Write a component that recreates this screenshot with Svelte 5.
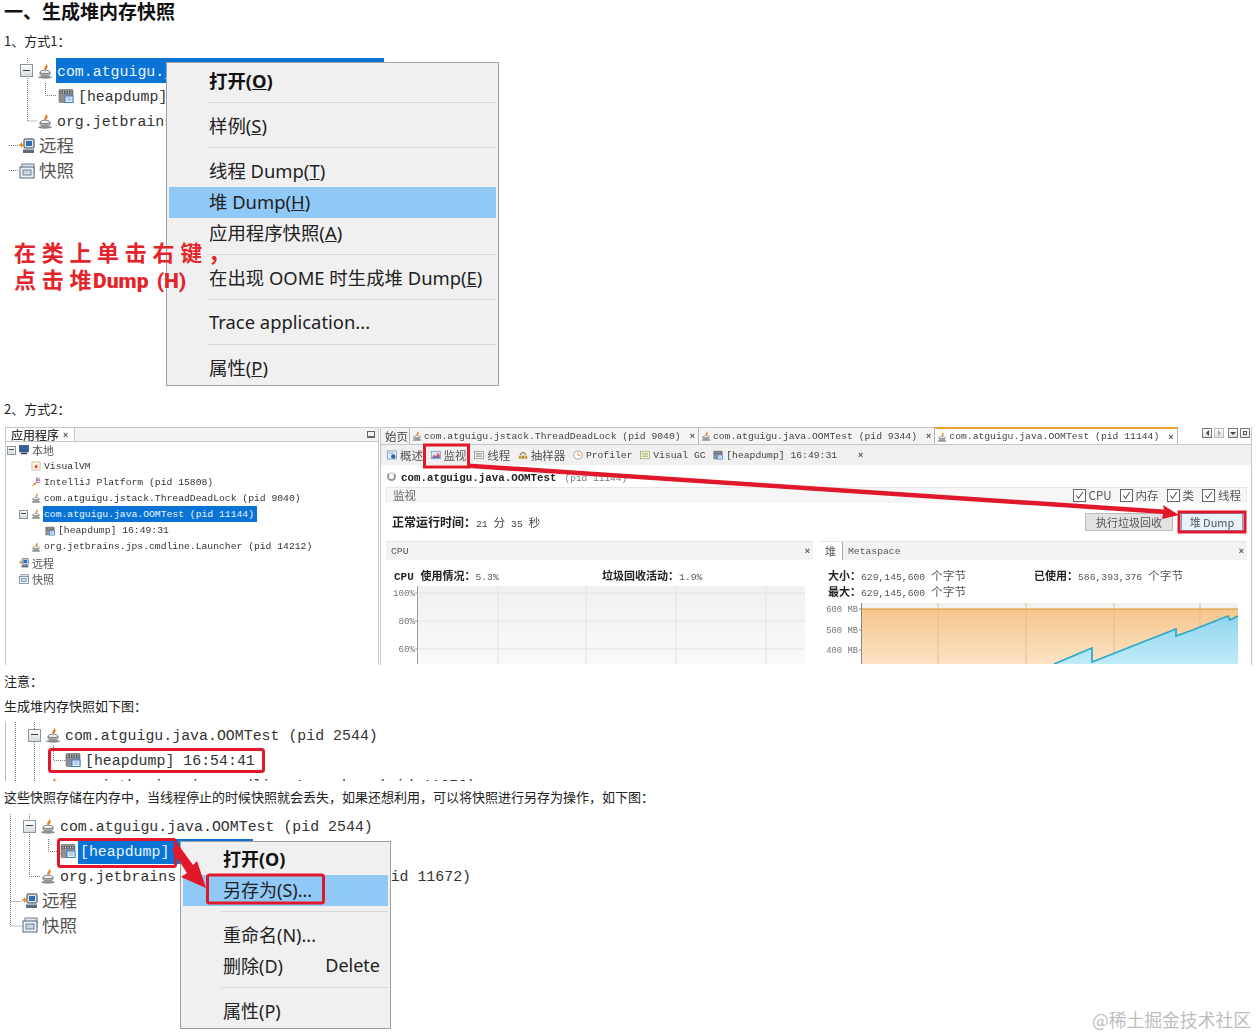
<script>
  // screenshots embedded in the article are rebuilt as small trees, menus and panes
  const tree1 = [
    { x: 20, exp: true, icon: "java", text: "com.atguigu.java.OOMTest (pid 11144)", sel: true },
    { x: 58, icon: "heap", text: "[heapdump]" },
    { x: 37, icon: "java", text: "org.jetbrains.jps.cmdline.Launcher (pid 14212)" },
    { x: 19, icon: "remote", text: "远程", cn: true },
    { x: 19, icon: "snap", text: "快照", cn: true }
  ];

  const tree2 = [
    { x: 1, exp: true, icon: "local", text: "本地", cn: true },
    { x: 25, icon: "vm", text: "VisualVM" },
    { x: 25, icon: "idea", text: "IntelliJ Platform (pid 15808)" },
    { x: 25, icon: "java", text: "com.atguigu.jstack.ThreadDeadLock (pid 9040)" },
    { x: 13, exp: true, icon: "java", text: "com.atguigu.java.OOMTest (pid 11144)", sel: true },
    { x: 39, icon: "heap", text: "[heapdump] 16:49:31" },
    { x: 25, icon: "java", text: "org.jetbrains.jps.cmdline.Launcher (pid 14212)" },
    { x: 13, icon: "remote", text: "远程", cn: true },
    { x: 13, icon: "snap", text: "快照", cn: true }
  ];

  const tree3 = [
    { x: 28, exp: true, icon: "java", text: "com.atguigu.java.OOMTest (pid 2544)" },
    { x: 65, icon: "heap", text: "[heapdump] 16:54:41" },
    { x: 45, icon: "java", text: "org.jetbrains.jps.cmdline.Launcher (pid 11672)" }
  ];

  const tree4 = [
    { x: 23, exp: true, icon: "java", text: "com.atguigu.java.OOMTest (pid 2544)" },
    { x: 60, icon: "heap", text: "[heapdump] 16:54:41", sel: true },
    { x: 40, icon: "java", text: "org.jetbrains.jps.cmdline.Launcher (pid 11672)" },
    { x: 22, icon: "remote", text: "远程", cn: true },
    { x: 22, icon: "snap", text: "快照", cn: true }
  ];

  const menu1 = [
    { label: "打开", key: "O", bold: true },
    { sep: true },
    { label: "样例", key: "S" },
    { sep: true },
    { label: "线程 Dump", key: "T" },
    { label: "堆 Dump", key: "H", hot: true },
    { label: "应用程序快照", key: "A" },
    { sep: true },
    { label: "在出现 OOME 时生成堆 Dump", key: "E" },
    { sep: true },
    { label: "Trace application..." },
    { sep: true },
    { label: "属性", key: "P" }
  ];

  const menu2 = [
    { label: "打开(O)", bold: true },
    { label: "另存为(S)...", hot: true },
    { sep: true },
    { label: "重命名(N)..." },
    { label: "删除(D)", accel: "Delete" },
    { sep: true },
    { label: "属性(P)" }
  ];

  const docTabs = [
    { text: "com.atguigu.jstack.ThreadDeadLock (pid 9040)" },
    { text: "com.atguigu.java.OOMTest (pid 9344)" },
    { text: "com.atguigu.java.OOMTest (pid 11144)", active: true }
  ];

  const subTabs = [
    { icon: "info", text: "概述", cn: true },
    { icon: "chart", text: "监视", cn: true },
    { icon: "lines", text: "线程", cn: true },
    { icon: "sampler", text: "抽样器", cn: true },
    { icon: "clock", text: "Profiler" },
    { icon: "gc", text: "Visual GC" },
    { icon: "heap", text: "[heapdump] 16:49:31", close: true }
  ];

  const checks = ["CPU", "内存", "类", "线程"];
</script>

{#snippet icon(name)}
  <svg class="ico" viewBox="0 0 16 16">
    {#if name === "java"}
      <path d="M9 0.5c1 2.4-2.6 3.4-1.6 6 .3.7.8 1.2 1.2 1.6-.3-1.8 2.8-3 2-5.2-.3-.9-.9-1.6-1.6-2.4z" fill="#e0842a" />
      <ellipse cx="8" cy="9" rx="5" ry="1.8" fill="#eee" stroke="#777" stroke-width=".8" />
      <path d="M3 9v2.2c0 1 2.2 1.8 5 1.8s5-.8 5-1.8V9c0 1-2.2 1.8-5 1.8S3 10 3 9z" fill="#b5b5b5" stroke="#777" stroke-width=".8" />
      <ellipse cx="8" cy="14.2" rx="7" ry="1.5" fill="#8f8f8f" />
    {:else if name === "heap"}
      <rect x="1" y="1.5" width="14" height="13" rx="1" fill="#8d9197" stroke="#666" stroke-width=".6" />
      <path d="M1.5 4.5h13" stroke="#55595d" stroke-width="3" />
      <path d="M3 3.5v2M5.5 3.5v2M8 3.5v2M10.5 3.5v2M13 3.5v2" stroke="#ddd" stroke-width="1" />
      <rect x="7" y="8" width="8" height="6.5" fill="#eef4fb" stroke="#3b78c4" />
      <path d="M8.5 10h5M8.5 12h5" stroke="#7fa8d8" />
    {:else if name === "remote"}
      <rect x="5" y="1" width="10" height="9" rx="1" fill="#dfe6ee" stroke="#2d3c50" />
      <rect x="7" y="3" width="6" height="5" fill="#2f6db5" />
      <path d="M0 7h5M2.5 4.5v5" stroke="#d98a2b" stroke-width="1.4" />
      <path d="M4 11.5h11v3.5H4z" fill="#5b6a7c" />
    {:else if name === "snap"}
      <rect x="3" y="1" width="12" height="9" fill="#dfe6ee" stroke="#6f8094" />
      <rect x="1" y="4" width="14" height="11" fill="#eef2f6" stroke="#55677d" />
      <rect x="4" y="7" width="8" height="5" fill="#c9d5e2" stroke="#6f8094" />
    {:else if name === "local"}
      <rect x="1" y="1" width="14" height="10" fill="#2f5f9c" stroke="#22344f" />
      <path d="M3 13.5h10" stroke="#22344f" stroke-width="2.4" />
    {:else if name === "vm"}
      <rect x="1.5" y="1.5" width="13" height="13" fill="#fdf5ea" stroke="#b89a78" />
      <path d="M5 10l3-5 3 3-2 4z" fill="#d8562c" />
    {:else if name === "idea"}
      <path d="M2 14l5-5M5 14l4-6" stroke="#d88a2a" stroke-width="1.6" />
      <path d="M9 1v8M9 1.5h3.5a2 2 0 010 3.5H9M9 5h4a2.2 2.2 0 010 4H9" fill="none" stroke="#a34fa8" stroke-width="1.3" />
    {:else if name === "info"}
      <rect x="1" y="1.5" width="14" height="13" fill="#e8eef6" stroke="#5d7ea8" />
      <circle cx="10" cy="10.5" r="3.6" fill="#2c68b0" />
      <path d="M3 5h8" stroke="#5d7ea8" />
    {:else if name === "chart"}
      <rect x="1" y="2" width="14" height="12" fill="#dbe7f5" stroke="#6d86a8" />
      <path d="M2 12l3-5 3 3 3-6 3 4v4H2z" fill="#d5567a" />
      <path d="M2 12h12" stroke="#3b78c4" stroke-width="2" />
    {:else if name === "lines"}
      <rect x="1" y="2" width="14" height="12" fill="#f4f4f0" stroke="#7a7a70" />
      <path d="M3 5.5h10M3 8h10M3 10.5h10" stroke="#6f7f60" />
    {:else if name === "sampler"}
      <path d="M4 8a4 4 0 018 0" fill="none" stroke="#7a5a20" stroke-width="1.5" />
      <rect x="1" y="9" width="4" height="5" fill="#d99a2b" />
      <rect x="6" y="9" width="4" height="5" fill="#7f9a3b" />
      <rect x="11" y="9" width="4" height="5" fill="#d99a2b" />
    {:else if name === "clock"}
      <circle cx="8" cy="8" r="6.5" fill="#fff" stroke="#777" />
      <path d="M8 4v4.5h3.5" fill="none" stroke="#d0702a" stroke-width="1.2" />
    {:else if name === "gc"}
      <rect x="1" y="2" width="14" height="12" fill="#fbf8d8" stroke="#8a9a60" />
      <path d="M3 5.5h10M3 8h10M3 10.5h10" stroke="#7aa060" />
    {/if}
  </svg>
{/snippet}

{#snippet tree(rows, cls)}
  <div class="tree {cls}">
    {#each rows as r}
      <div class="row" style="padding-left: {r.x}px">
        {#if r.exp}<span class="exp"></span>{/if}
        <span class="slot">{@render icon(r.icon)}</span>
        <span class="label" class:sel={r.sel} class:cn={r.cn}>{r.text}</span>
      </div>
    {/each}
  </div>
{/snippet}

{#snippet menu(items, cls)}
  <div class="menu {cls}">
    {#each items as m}
      {#if m.sep}
        <div class="sep"></div>
      {:else}
        <div class="item" class:hot={m.hot} class:bold={m.bold}>
          <span>{m.label}{#if m.key}(<u>{m.key}</u>){/if}</span>
          {#if m.accel}<span>{m.accel}</span>{/if}
        </div>
      {/if}
    {/each}
  </div>
{/snippet}

<div class="page">
  <h2>一、生成堆内存快照</h2>
  <p class="p1">1、方式1：</p>

  <div class="fig fig1">
    <svg class="over under" viewBox="0 58 1257 328">
      <g class="dots">
        <path d="M27.5 58V121H37M45.5 83V95.5H57M9 145.5H19M9 170.5H19" />
      </g>
    </svg>
    {@render tree(tree1, "big")}
    {@render menu(menu1, "m1")}
    <div class="note">
      <div>在类上单击右键，</div>
      <div>点击堆<b>Dump (H)</b></div>
    </div>
  </div>

  <p class="p2">2、方式2：</p>

  <div class="vm">
    <div class="left">
      <div class="lhead">
        <span class="ltab">应用程序 <i>×</i></span>
        <span class="minbtn"></span>
      </div>
      {@render tree(tree2, "small")}
    </div>
    <div class="right">
      <div class="tabs">
        <span class="tab first">始页</span>
        {#each docTabs as t}
          <span class="tab" class:active={t.active}>
            <span class="s10">{@render icon("java")}</span>
            <span class="tt">{t.text}</span>
            <i>×</i>
          </span>
        {/each}
        <span class="nav">
          <span class="nb l"></span><span class="nb r"></span>
          <span class="nb d"></span><span class="nb w"></span>
        </span>
      </div>
      <div class="subs">
        {#each subTabs as s}
          <span class="sub" class:cn={s.cn}>
            <span class="s10">{@render icon(s.icon)}</span>
            <span>{s.text}</span>
            {#if s.close}<i>×</i>{/if}
          </span>
        {/each}
      </div>
      <div class="title">
        <span class="spin"></span>
        <b>com.atguigu.java.OOMTest</b>
        <span class="pid">(pid 11144)</span>
      </div>
      <div class="sect">
        <span>监视</span>
        <div class="checks">
          {#each checks as c}
            <span class="chk">
              <span class="box">
                <svg viewBox="0 0 12 12"><path d="M2.5 6l2.5 3 4.5-6.5" fill="none" stroke="#444" stroke-width="1.1" /></svg>
              </span>
              {c}
            </span>
          {/each}
        </div>
      </div>
      <div class="uptime">
        <span><b>正常运行时间：</b>21 <em>分</em> 35 <em>秒</em></span>
        <div class="btns">
          <span class="btn gc">执行垃圾回收</span>
          <span class="btn dump">堆 Dump</span>
        </div>
      </div>
      <div class="panels">
        <div class="panel">
          <div class="phead"><span>CPU</span><i>×</i></div>
          <div class="stats s1">
            <div><span class="st"><b>CPU 使用情况：</b>5.3%</span><span class="st"><b>垃圾回收活动：</b>1.9%</span></div>
          </div>
          <svg class="chart c1" viewBox="386 587 419 78">
            <defs>
              <linearGradient id="g0" x1="0" y1="0" x2="0" y2="1">
                <stop offset="0" stop-color="#f1f1f1" /><stop offset="1" stop-color="#f9f9f9" />
              </linearGradient>
            </defs>
            <rect x="418" y="587" width="387" height="78" fill="url(#g0)" />
            <path d="M498 587V665M586 587V665M676 587V665M766 587V665M418 594H805M418 622H805M418 650H805" stroke="#e3e3e3" fill="none" />
            <path d="M417.5 587V665M415 594H418M415 622H418M415 650H418" stroke="#999" fill="none" />
            <text x="415" y="597">100%</text>
            <text x="415" y="625">80%</text>
            <text x="415" y="653">60%</text>
          </svg>
        </div>
        <div class="panel">
          <div class="phead heap"><span class="htab">堆</span><span class="meta">Metaspace</span><i>×</i></div>
          <div class="stats s2">
            <div><span class="st"><b>大小：</b>629,145,600 <em>个字节</em></span><span class="st"><b>已使用：</b>586,393,376 <em>个字节</em></span></div>
            <div><span class="st"><b>最大：</b>629,145,600 <em>个字节</em></span></div>
          </div>
          <svg class="chart c2" viewBox="819 604 421 61">
            <defs>
              <linearGradient id="g1" x1="0" y1="0" x2="0" y2="1">
                <stop offset="0" stop-color="#f5c68c" /><stop offset="1" stop-color="#fbe3c6" />
              </linearGradient>
              <linearGradient id="g2" x1="0" y1="0" x2="0" y2="1">
                <stop offset="0" stop-color="#8fd6ef" /><stop offset="1" stop-color="#c0ebf8" />
              </linearGradient>
            </defs>
            <rect x="862" y="604" width="376" height="6" fill="#f2f2f2" />
            <rect x="862" y="610" width="376" height="55" fill="url(#g1)" />
            <path d="M938 604V665M1026 604V665M1114 604V665M1200 604V665" stroke="#e6bd8a" fill="none" />
            <path d="M1054 665L1092 649V663L1176 630V637L1190 632L1228 617L1230 621L1238 617V665Z" fill="url(#g2)" />
            <path d="M1054 665L1092 649V663L1176 630V637L1190 632L1228 617L1230 621L1238 617" fill="none" stroke="#2da7cc" stroke-width="1.7" />
            <path d="M862 610H1238" stroke="#d8922c" stroke-width="1.2" />
            <path d="M861.5 604V665M859 610H862M859 631H862M859 651H862" stroke="#888" fill="none" />
            <text x="858" y="613">600 MB</text>
            <text x="858" y="634">500 MB</text>
            <text x="858" y="654">400 MB</text>
          </svg>
        </div>
      </div>
    </div>
    <svg class="over" viewBox="5 425 1247 240">
      <g class="red">
        <rect x="424.5" y="445" width="44" height="22" />
        <rect x="1179" y="512" width="66" height="20" />
      </g>
      <path d="M468 463.5L1164 509.5L1163 505L1179 515L1162 519L1163 514L468 468Z" fill="#e0182a" />
    </svg>
  </div>

  <p class="p3">注意：</p>
  <p class="p4">生成堆内存快照如下图：</p>

  <div class="fig fig3">
    <svg class="over under" viewBox="0 722 1257 59">
      <path d="M5.5 722V781" stroke="#bbb" fill="none" />
      <g class="dots">
        <path d="M15.5 722V781M34.5 722V781M53.5 745V760.5H65" />
      </g>
    </svg>
    {@render tree(tree3, "mid")}
    <svg class="over" viewBox="0 722 1257 59">
      <rect class="redbox" x="49.5" y="749.5" width="214" height="22" rx="2" />
    </svg>
  </div>

  <p class="p5">这些快照存储在内存中，当线程停止的时候快照就会丢失，如果还想利用，可以将快照进行另存为操作，如下图：</p>

  <div class="fig fig4">
    <svg class="over under" viewBox="0 814 1257 222">
      <g class="dots">
        <path d="M10.5 814V926H22M10.5 901.5H22M29.5 814V876.5H40M48.5 839V851.5H60" />
      </g>
    </svg>
    {@render tree(tree4, "mid")}
    {@render menu(menu2, "m2")}
    <svg class="over" viewBox="0 814 1257 222">
      <rect class="redbox" x="58.5" y="839.5" width="117" height="27" rx="2" />
      <rect class="redbox" x="207.5" y="875" width="116" height="28" rx="2" />
      <path d="M177 843L193 865L197 861L206 888L181 877L187 873L172 850Z" fill="#e0182a" />
    </svg>
    <span class="mark">@稀土掘金技术社区</span>
  </div>
</div>

<style>
  :global(body) {
    margin: 0;
    background: #fff;
  }

  .page {
    width: 1257px;
    height: 1036px;
    overflow: hidden;
    font-family: "Noto Sans CJK SC", "Liberation Sans", sans-serif;
    color: #222;
  }

  h2 {
    margin: 0;
    padding-left: 4px;
    font-size: 19px;
    line-height: 21px;
    color: #111;
  }

  p {
    margin: 0;
    padding-left: 4px;
    font-size: 13px;
    line-height: 20px;
  }

  .p1 { margin-top: 10px; }
  .p2 { margin-top: 13px; }
  .p3 { margin-top: 6px; }
  .p4 { margin-top: 5px; }
  .p5 { margin-top: 6px; }

  .fig {
    position: relative;
    overflow: hidden;
  }

  .fig1 { margin-top: 7px; height: 328px; overflow: visible; }
  .fig3 { margin-top: 6px; height: 59px; }
  .fig4 { margin-top: 7px; height: 222px; }

  .fig3 .tree { padding-top: 1px; }

  .over {
    position: absolute;
    left: 0;
    top: 0;
    width: 100%;
    height: 100%;
    pointer-events: none;
  }

  .dots path {
    fill: none;
    stroke: #777;
    stroke-dasharray: 1 1;
  }

  /* tree rows, one size for each screenshot */
  .tree {
    position: relative;
    font-family: "Liberation Mono", "Noto Sans CJK SC", monospace;
    color: #333;
    white-space: nowrap;
  }

  .row {
    display: flex;
    align-items: center;
  }

  .exp {
    box-sizing: border-box;
    position: relative;
    flex: none;
    border: 1px solid #8a96a0;
    background: linear-gradient(#fff, #d6dbe0);
  }

  .exp::after {
    content: "";
    position: absolute;
    left: 15%;
    right: 15%;
    top: 50%;
    margin-top: -1px;
    height: 1px;
    background: #444;
  }

  .slot {
    display: flex;
    flex: none;
  }

  .ico {
    display: block;
    width: 100%;
    height: 100%;
  }

  .label {
    display: flex;
    align-items: center;
    align-self: stretch;
    box-sizing: border-box;
    padding-top: 2px;
  }

  .label.sel {
    background: #0a74d6;
    color: #e8f4ff;
  }

  .label.cn {
    padding-top: 0;
    padding-bottom: 2px;
    font-family: "Noto Sans CJK SC", sans-serif;
    color: #555;
  }

  .big .row { height: 25px; font-size: 14.9px; }
  .big .exp { width: 13px; height: 13px; margin-right: 4px; }
  .big .slot { width: 16px; height: 16px; margin-right: 4px; }
  .big .label.sel { margin-left: -1px; padding-left: 1px; padding-right: 5px; }
  .big .label.cn { font-size: 17.5px; }

  .mid .row { height: 24.75px; font-size: 14.9px; }
  .mid .exp { width: 13px; height: 13px; margin-right: 4px; }
  .mid .slot { width: 16px; height: 16px; margin-right: 4px; }
  .mid .label.sel { margin-left: -2px; padding-left: 2px; padding-right: 3px; }
  .mid .label.cn { font-size: 17.5px; }

  .small .row { height: 16.1px; font-size: 9.73px; }
  .small .exp { width: 9px; height: 9px; margin-right: 3px; }
  .small .slot { width: 10px; height: 10px; margin-right: 3px; }
  .small .label { padding-top: 0; padding-bottom: 0; }
  .small .label.sel { margin-left: -1px; padding-left: 1px; padding-right: 3px; }
  .small .label.cn { font-size: 11px; }

  /* context menus */
  .menu {
    position: absolute;
    box-sizing: border-box;
    border: 1px solid #a0a0a0;
    background: #f0f0f0;
    padding: 2.5px 2px;
    font-family: "Noto Sans", "Noto Sans CJK SC", sans-serif;
    font-size: 18px;
    color: #222;
  }

  .m1 { left: 166px; top: 4px; width: 333px; height: 324px; font-size: 18.4px; }
  .m2 { left: 180px; top: 27px; width: 211px; height: 188px; padding-top: 1.5px; }

  .item {
    display: flex;
    justify-content: space-between;
    align-items: center;
    box-sizing: border-box;
    height: 31px;
    padding: 0 8px 3px 40px;
    white-space: nowrap;
  }

  .item.bold { font-weight: 700; color: #111; }
  .item.hot { background: #90c8f6; }

  .sep {
    height: 14px;
    margin-left: 38px;
    box-sizing: border-box;
    padding-top: 5px;
  }

  .sep::after {
    content: "";
    display: block;
    height: 1px;
    background: #d8d8d8;
  }

  .note {
    position: absolute;
    left: 14px;
    top: 180px;
    font-size: 22px;
    line-height: 27px;
    letter-spacing: 5.7px;
    font-weight: 700;
    color: #e3242b;
    white-space: nowrap;
  }

  .note b {
    font-family: "Roboto", sans-serif;
    font-size: 21px;
    letter-spacing: 0;
    word-spacing: 3px;
    margin-left: -4px;
  }

  /* VisualVM window */
  .vm {
    position: relative;
    display: grid;
    grid-template-columns: 374px 872px;
    column-gap: 1px;
    width: 1247px;
    height: 240px;
    margin: 6px 0 0 5px;
    box-sizing: border-box;
    padding-top: 2px;
    overflow: hidden;
    font-family: "Liberation Mono", "Noto Sans CJK SC", monospace;
    font-size: 9.73px;
    color: #444;
    filter: blur(0.25px);
  }

  .vm i {
    font-style: normal;
    font-family: "Liberation Sans", sans-serif;
    font-weight: 700;
    font-size: 9px;
    color: #555;
  }

  .vm em {
    font-style: normal;
    font-size: 11.7px;
  }

  .left {
    box-sizing: border-box;
    border: 1px solid #c4c8cc;
    border-bottom: 0;
  }

  .lhead {
    display: flex;
    justify-content: space-between;
    align-items: center;
    box-sizing: border-box;
    height: 14px;
    border-bottom: 1px solid #c4c8cc;
    background: #f2f2f2;
  }

  .ltab {
    display: flex;
    align-items: center;
    gap: 4px;
    height: 13px;
    padding: 0 5px;
    width: 58px;
    background: #fff;
    border-right: 1px solid #c4c8cc;
    font-family: "Noto Sans CJK SC", sans-serif;
    font-size: 12px;
    font-weight: 500;
    color: #333;
  }

  .minbtn {
    width: 6px;
    height: 4px;
    margin-right: 3px;
    border: 1px solid #666;
    border-bottom-width: 2px;
  }

  .right {
    box-sizing: border-box;
    min-width: 0;
    border-right: 1px solid #c4c8cc;
    border-left: 1px solid #c4c8cc;
    overflow: hidden;
  }

  .tabs {
    display: flex;
    height: 17px;
    white-space: nowrap;
    border-bottom: 1px solid #c4c8cc;
    background: #fff;
  }

  .tab {
    display: flex;
    align-items: center;
    box-sizing: border-box;
    padding: 0 3px 0 2px;
    gap: 2px;
    border-top: 1px solid #c4c8cc;
    border-right: 1px solid #b0b8c0;
    background: #f4f4f4;
  }

  .tab i { margin-left: 7px; }
  .tab.first { width: 29px; padding-left: 4px; font-family: "Noto Sans CJK SC", sans-serif; font-size: 11.5px; overflow: hidden; }
  .tab.active { border-top: 2px solid #f0a030; background: #fff; padding-left: 2px; padding-right: 3px; }

  .s10 { display: block; width: 10px; height: 10px; flex: none; }

  .nav {
    display: flex;
    gap: 2px;
    margin-left: auto;
    padding-right: 1px;
  }

  .nb {
    box-sizing: border-box;
    width: 10px;
    height: 10px;
    margin-top: 1px;
    border: 1px solid #777;
    background: linear-gradient(#fff, #e0e0e0);
    position: relative;
  }

  .nb.r { margin-right: 2px; border-color: #bbb; }
  .nb::after {
    content: "";
    position: absolute;
    left: 2px;
    top: 1px;
    border: 3px solid transparent;
  }
  .nb.l::after { left: 0; border-right-color: #444; }
  .nb.r::after { left: 3px; border-left-color: #aaa; }
  .nb.d::after { left: 1px; top: 3px; border-top-color: #444; }
  .nb.w::after { left: 2px; top: 2px; border: 1px solid #555; width: 2px; height: 2px; }

  .subs {
    display: flex;
    align-items: center;
    gap: 7.6px;
    height: 20px;
    padding-left: 6px;
    background: #f0f0f0;
    white-space: nowrap;
  }

  .sub { display: flex; align-items: center; gap: 3px; }
  .sub.cn { font-family: "Noto Sans CJK SC", sans-serif; font-size: 11.5px; color: #555; }
  .sub i { margin-left: 18px; }

  .title {
    display: flex;
    align-items: center;
    box-sizing: border-box;
    height: 22px;
    padding: 4px 0 0 6px;
    white-space: nowrap;
  }

  .title b { font-size: 10.8px; color: #222; margin-left: 5px; }
  .title .pid { color: #777; margin-left: 8px; font-size: 9.5px; }

  .spin {
    box-sizing: border-box;
    width: 9px;
    height: 9px;
    margin-top: -4px;
    border: 2px solid #999;
    border-top-color: #ddd;
    border-radius: 50%;
  }

  .sect {
    display: flex;
    justify-content: space-between;
    align-items: center;
    box-sizing: border-box;
    height: 16px;
    margin: 0 4px 0 5px;
    padding: 0 5px 1px 6px;
    background: #f6f6f6;
    border: 1px solid #e6e6e6;
    border-bottom: 0;
    font-family: "Noto Sans CJK SC", sans-serif;
    font-size: 11.5px;
    color: #666;
  }

  .checks { display: flex; gap: 8px; }

  .chk {
    display: flex;
    align-items: center;
    gap: 3px;
    color: #555;
  }

  .box {
    box-sizing: border-box;
    display: block;
    width: 13px;
    height: 13px;
    border: 1px solid #666;
    background: #fff;
  }

  .box svg { display: block; width: 100%; height: 100%; }

  .uptime {
    display: flex;
    justify-content: space-between;
    align-items: center;
    height: 38px;
    padding: 0 8px 0 11px;
    white-space: nowrap;
  }

  .uptime b {
    font-family: "Noto Sans CJK SC", sans-serif;
    font-size: 12px;
    color: #222;
  }

  .btns { display: flex; gap: 8px; }

  .btn {
    box-sizing: border-box;
    display: flex;
    align-items: center;
    justify-content: center;
    height: 18px;
    font-family: "Noto Sans CJK SC", sans-serif;
    font-size: 11px;
  }

  .btn.gc { width: 88px; background: #e2e2e2; border: 1px solid #bbb; color: #555; }
  .btn.dump { width: 62px; background: #e8f2fa; border: 1px solid #6f9fd0; color: #555; }

  .panels {
    display: grid;
    grid-template-columns: 427px 428px;
    column-gap: 6px;
    padding-left: 5px;
  }

  .phead {
    display: flex;
    justify-content: space-between;
    align-items: center;
    box-sizing: border-box;
    height: 19px;
    padding: 0 3px 0 5px;
    background: #f3f3f3;
    border-top: 1px solid #e4e4e4;
    color: #555;
  }

  .phead.heap { padding-left: 0; }
  .htab {
    display: flex;
    align-items: center;
    justify-content: center;
    width: 23px;
    height: 18px;
    background: #fff;
    border-right: 1px solid #aaa;
    font-family: "Noto Sans CJK SC", sans-serif;
    font-size: 11.5px;
  }
  .meta { margin-left: 5px; margin-right: auto; }

  .stats { padding-top: 7px; white-space: nowrap; }
  .stats > div { display: flex; height: 16px; align-items: center; }
  .stats b {
    font-weight: 700;
    color: #222;
    font-family: "Liberation Mono", "Noto Sans CJK SC", monospace;
    font-size: 11px;
  }
  .stats .st { flex: none; color: #555; }
  .s1 { padding-left: 8px; }
  .s1 .st { width: 208px; }
  .s2 { padding-left: 9px; }
  .s2 .st { width: 206px; }

  .chart { display: block; }
  .chart text {
    font-family: "Liberation Mono", monospace;
    font-size: 9.2px;
    fill: #777;
    text-anchor: end;
  }
  .c1 { width: 419px; height: 78px; margin-top: 3px; }
  .c2 { width: 421px; height: 61px; margin-top: 4px; }
  .c2 text { font-size: 8.8px; }

  .red rect, .redbox {
    fill: none;
    stroke: #e0182a;
    stroke-width: 3;
  }

  .mark {
    position: absolute;
    right: 6px;
    bottom: 5px;
    font-size: 17.8px;
    line-height: 24px;
    color: #bdbdbd;
    white-space: nowrap;
  }
</style>
